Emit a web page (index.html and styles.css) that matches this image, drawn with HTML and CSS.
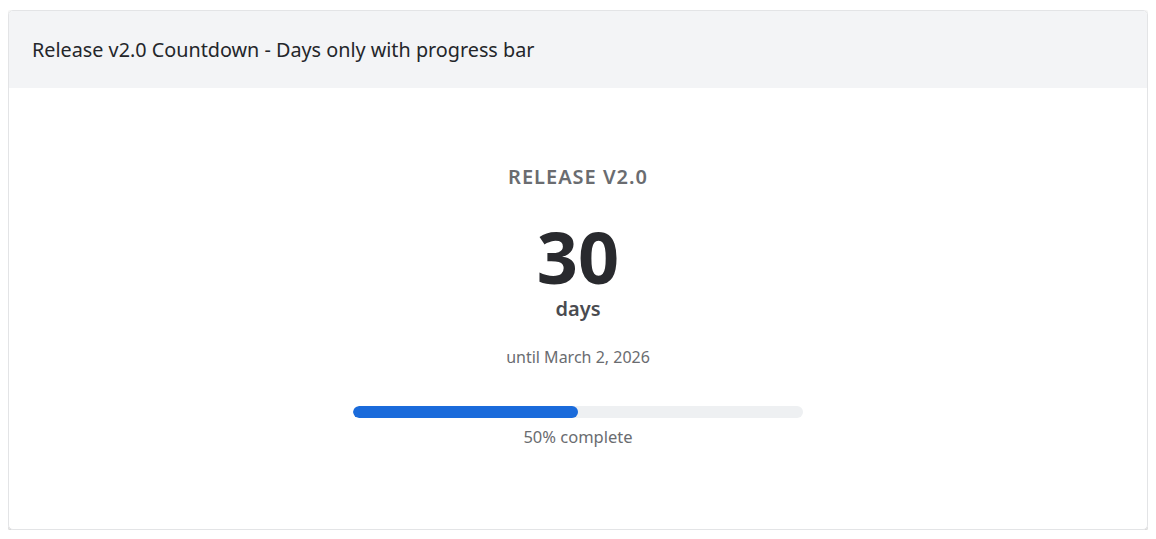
FILE: index.html
```html
<!DOCTYPE html>
<html>
<head>
<meta charset="utf-8">
<link rel="stylesheet" href="styles.css">
</head>
<body>
<div class="card">
  <div class="card-header">Release v2.0 Countdown - Days only with progress bar</div>
  <div class="card-body">
    <div class="label">Release v2.0</div>
    <div class="number">30</div>
    <div class="unit">days</div>
    <div class="until">until March 2, 2026</div>
    <div class="progress"><div class="progress-fill" style="width:50%"></div></div>
    <div class="progress-text">50% complete</div>
  </div>
</div>
</body>
</html>
```
FILE: styles.css
```css
body {
  margin: 10px 8px 8px;
  font-family: "Noto Sans", "Open Sans", sans-serif;
  background: #fff;
}
.card {
  border: 1px solid #e3e4e6;
  border-radius: 5px;
  box-shadow: 0 1px 3px rgba(0,0,0,0.3);
  overflow: hidden;
  height: 518px;
  display: flex;
  flex-direction: column;
}
.card-header {
  background: #f3f4f6;
  height: 77px;
  padding: 0 23px;
  display: flex;
  align-items: center;
  font-size: 19.8px;
  color: #24262a;
}
.card-body {
  flex: 1;
  display: flex;
  flex-direction: column;
  align-items: center;
  padding-top: 75px;
}
.label {
  font-size: 20px;
  font-weight: 600;
  letter-spacing: 1px;
  text-transform: uppercase;
  color: #6a6c70;
  line-height: 28px;
}
.number {
  font-size: 72px;
  font-weight: 700;
  color: #292a2e;
  line-height: 72px;
  margin-top: 29px;
}
.unit {
  font-size: 20px;
  font-weight: 600;
  color: #4a4b50;
  line-height: 26px;
  margin-top: 4px;
}
.until {
  font-size: 16px;
  color: #6a6c70;
  margin-top: 24px;
  line-height: 22px;
}
.progress {
  width: 450px;
  height: 12px;
  border-radius: 6px;
  background: #eef0f2;
  overflow: hidden;
  margin-top: 38px;
}
.progress-fill {
  height: 100%;
  background: #1a6bdb;
  border-radius: 6px;
}
.progress-text {
  font-size: 16.5px;
  color: #6a6c70;
  margin-top: 8px;
  line-height: 22px;
}
```
